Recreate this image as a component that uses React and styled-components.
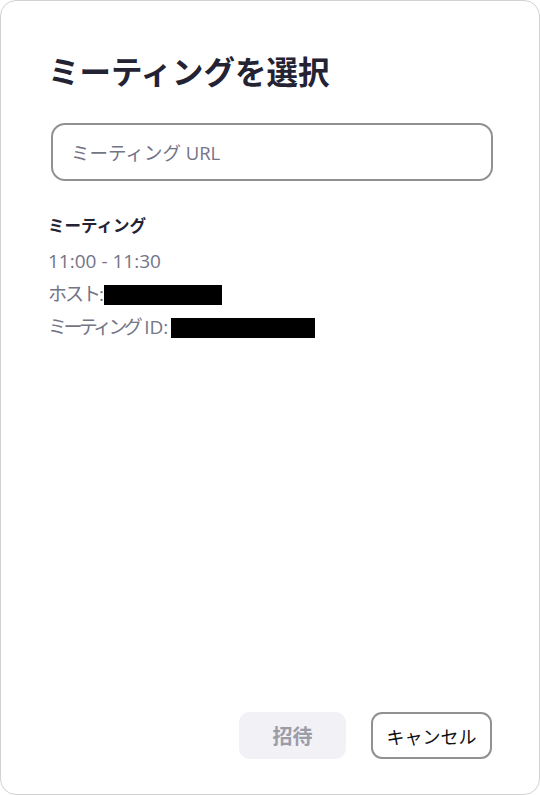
import React from 'react';
import styled, { createGlobalStyle } from 'styled-components';

const GlobalStyle = createGlobalStyle`
    html, body {
        margin: 0;
        padding: 0;
        background: #ffffff;
        font-family: "Open Sans", "Noto Sans CJK JP", sans-serif;
    }
`;

const Dialog = styled.div`
    box-sizing: border-box;
    width: 540px;
    height: 795px;
    border: 1px solid #d2d2d2;
    border-radius: 16px;
    background: #ffffff;
    padding: 51px 47px 35px 47px;
    display: flex;
    flex-direction: column;
`;

const Title = styled.h1`
    margin: 0;
    font-size: 31.5px;
    line-height: 40px;
    font-weight: 700;
    color: #232333;
`;

const UrlInput = styled.input`
    box-sizing: border-box;
    margin-top: 31px;
    width: 442px;
    height: 58px;
    margin-left: 3px;
    border: 2px solid #919191;
    border-radius: 14px;
    padding: 0 18px;
    font-family: inherit;
    font-size: 18.5px;
    color: #232333;
    outline: none;
    &::placeholder {
        color: #747487;
    }
`;

const Meeting = styled.div`
    margin-top: 32px;
    display: flex;
    flex-direction: column;
`;

const MeetingName = styled.div`
    font-size: 16.5px;
    font-weight: 700;
    color: #232333;
    line-height: 26px;
    margin-bottom: 6px;
`;

const Detail = styled.div`
    font-size: 19px;
    line-height: 33px;
    color: #747487;
    display: flex;
    align-items: center;
    white-space: pre;
`;

const Jp = styled.span`
    letter-spacing: ${p => p.$tight ? '-3.6px' : '-2px'};
`;

const Redacted = styled.span`
    display: inline-block;
    width: ${p => p.$w}px;
    height: 20px;
    background: #000000;
    margin-left: ${p => p.$ml}px;
`;

const Spacer = styled.div`
    flex: 1;
`;

const Footer = styled.div`
    display: flex;
    justify-content: flex-end;
    gap: 25px;
`;

const Button = styled.button`
    box-sizing: border-box;
    height: 47px;
    font-family: inherit;
    border-radius: 11px;
    cursor: pointer;
    padding: 0;
    ${p => p.$primary ? `
        width: 107px;
        border: none;
        background: #f1f1f6;
        color: #9c9ca6;
        font-weight: 700;
        font-size: 20px;
    ` : `
        width: 121px;
        border: 2px solid #919191;
        background: #ffffff;
        color: #111111;
        font-weight: 400;
        font-size: 18px;
    `}
`;

const App = () => {
    return (
        <>
            <GlobalStyle />
            <Dialog>
                <Title>ミーティングを選択</Title>
                <UrlInput type="text" placeholder="ミーティング URL" />
                <Meeting>
                    <MeetingName>ミーティング</MeetingName>
                    <Detail>11:00 - 11:30</Detail>
                    <Detail><Jp>ホスト</Jp>:<Redacted $w={118} $ml={0} /></Detail>
                    <Detail><Jp $tight>ミーティング</Jp> ID:<Redacted $w={144} $ml={3} /></Detail>
                </Meeting>
                <Spacer />
                <Footer>
                    <Button $primary disabled>招待</Button>
                    <Button>キャンセル</Button>
                </Footer>
            </Dialog>
        </>
    );
};

export default App;
